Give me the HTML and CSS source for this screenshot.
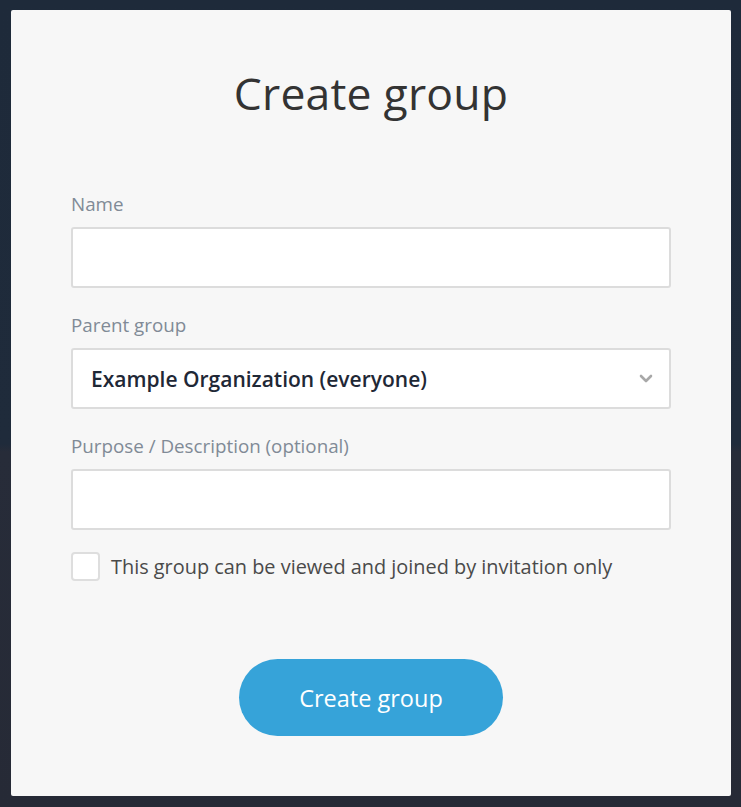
FILE: index.html
```html
<!DOCTYPE html>
<html>
<head>
<meta charset="utf-8">
<link rel="stylesheet" href="styles.css">
</head>
<body>
<div class="backdrop">
  <div class="modal">
    <h1 class="title">Create group</h1>
    <form class="form">
      <div class="fields">
        <label class="field">
          <span class="label">Name</span>
          <span class="input"></span>
        </label>
        <label class="field">
          <span class="label">Parent group</span>
          <span class="input select">
            <span class="select-text">Example Organization (everyone)</span>
            <svg class="chevron" width="14" height="9" viewBox="0 0 14 9"><path d="M2 2 L7 7 L12 2" fill="none" stroke="#a8a8a8" stroke-width="2.6" stroke-linecap="round" stroke-linejoin="round"/></svg>
          </span>
        </label>
        <label class="field">
          <span class="label">Purpose / Description (optional)</span>
          <span class="input"></span>
        </label>
      </div>
      <div class="check-row">
        <span class="checkbox"></span>
        <span class="check-text">This group can be viewed and joined by invitation only</span>
      </div>
      <div class="actions">
        <button type="button" class="btn">Create group</button>
      </div>
    </form>
  </div>
</div>
</body>
</html>
```

FILE: styles.css
```css
html, body {
  margin: 0;
  padding: 0;
}
body {
  width: 741px;
  height: 807px;
  overflow: hidden;
  font-family: "Open Sans", "Noto Sans", sans-serif;
  background: #232b39;
}
.backdrop {
  height: 807px;
  padding: 10px 10px 0 11px;
  box-sizing: border-box;
  background: linear-gradient(180deg, #1e2a3a 0%, #1f2b3b 55%, #272c39 56%, #262a36 100%);
}
.modal {
  width: 720px;
  height: 786px;
  box-sizing: border-box;
  background: #f7f7f7;
  border-radius: 2px;
  padding: 0 60px;
  display: flex;
  flex-direction: column;
}
.title {
  margin: 55px 0 0;
  text-align: center;
  font-weight: 400;
  font-size: 44.5px;
  line-height: 56px;
  color: #333333;
  letter-spacing: 0.2px;
}
.form {
  margin-top: 71px;
  display: flex;
  flex-direction: column;
}
.fields {
  display: flex;
  flex-direction: column;
  gap: 25px;
}
.field {
  display: flex;
  flex-direction: column;
}
.label {
  font-size: 18.8px;
  line-height: 24px;
  color: #808a96;
  margin-bottom: 11px;
}
.input {
  display: flex;
  align-items: center;
  height: 61px;
  box-sizing: border-box;
  background: #ffffff;
  border: 2px solid #dcdcdc;
  border-radius: 3px;
}
.select {
  padding: 0 16px 0 18px;
  justify-content: space-between;
}
.select-text {
  font-size: 21px;
  font-weight: 600;
  color: #1f2836;
}
.chevron {
  display: block;
}
.check-row {
  display: flex;
  align-items: center;
  gap: 11px;
  margin-top: 22px;
}
.checkbox {
  width: 29px;
  height: 29px;
  box-sizing: border-box;
  background: #ffffff;
  border: 2px solid #dedede;
  border-radius: 4px;
}
.check-text {
  font-size: 19.9px;
  color: #4a4a4a;
}
.actions {
  display: flex;
  justify-content: center;
  margin-top: 78px;
}
.btn {
  width: 264px;
  height: 77px;
  border: none;
  border-radius: 39px;
  background: #36a3d9;
  color: #ffffff;
  font-family: "Open Sans", "Noto Sans", sans-serif;
  font-size: 23.5px;
  font-weight: 400;
  cursor: pointer;
}
```
